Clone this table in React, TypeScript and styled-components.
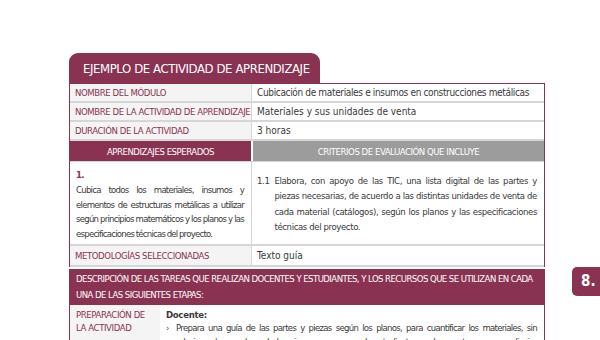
import styled, { createGlobalStyle } from "styled-components";

const maroon = "#8a3252";
const grey = "#9c9c9c";
const line = "#d6d6d6";
const labelBg = "#f5f4f4";
const text = "#3a3a3a";

const GlobalStyle = createGlobalStyle`
  html, body {
    margin: 0;
    padding: 0;
    background: #ffffff;
  }
  body {
    font-family: "DejaVu Sans Condensed", "DejaVu Sans", "Liberation Sans", sans-serif;
    font-stretch: condensed;
  }
`;

const Page = styled.div`
  width: 600px;
  height: 340px;
  overflow: hidden;
  display: flex;
  align-items: flex-start;
  gap: 27px;
  padding: 53px 0 0 69px;
  box-sizing: border-box;
`;

const Sheet = styled.div`
  width: 476px;
  flex-shrink: 0;
`;

const TitleTab = styled.div`
  width: 251px;
  height: 30px;
  box-sizing: border-box;
  background: ${maroon};
  border-radius: 9px 9px 0 0;
  color: #ffffff;
  font-size: 13px;
  letter-spacing: -0.4px;
  line-height: 32px;
  padding-left: 14px;
  white-space: nowrap;
`;

const Table = styled.div`
  border-left: 1px solid ${maroon};
  border-right: 1px solid ${maroon};
  border-top: 1px solid ${maroon};
`;

const Row = styled.div`
  display: grid;
  grid-template-columns: 182px 1fr;
  border-bottom: 2px solid ${line};
`;

const Label = styled.div<{ $h?: number }>`
  background: ${labelBg};
  color: ${maroon};
  font-size: 9.5px;
  letter-spacing: -0.4px;
  text-transform: uppercase;
  padding: 0 0 0 5px;
  min-height: ${(p) => p.$h ?? 17}px;
  display: flex;
  align-items: center;
  border-right: 1px solid ${line};
  white-space: nowrap;
`;

const Value = styled.div<{ $tight?: boolean }>`
  color: ${text};
  font-size: 10px;
  letter-spacing: ${(p) => (p.$tight ? "-0.35px" : "0")};
  padding: 0 5px;
  display: flex;
  align-items: center;
  white-space: nowrap;
`;

const HeadRow = styled.div`
  display: grid;
  grid-template-columns: 181px 1fr;
  gap: 2px;
  border-bottom: 1px solid ${line};
`;

const HeadCell = styled.div<{ $grey?: boolean }>`
  background: ${(p) => (p.$grey ? grey : maroon)};
  color: #ffffff;
  font-size: 9.5px;
  letter-spacing: -0.45px;
  height: 20px;
  display: flex;
  align-items: center;
  justify-content: center;
  text-transform: uppercase;
`;

const ContentRow = styled.div`
  display: grid;
  grid-template-columns: 182px 1fr;
  border-bottom: 2px solid ${line};
`;

const LearnCell = styled.div`
  padding: 6px 7px 2px 6px;
  border-right: 1px solid ${line};
  color: ${text};
  font-size: 9.5px;
  letter-spacing: -0.75px;
  word-spacing: -0.5px;
  line-height: 14.8px;
  text-align: justify;
`;

const Num = styled.div`
  color: ${maroon};
  font-weight: bold;
`;

const CritCell = styled.div`
  padding: 11px 7px 6px 5px;
  color: ${text};
  font-size: 9.5px;
  letter-spacing: -0.38px;
  line-height: 15.3px;
  display: flex;
  gap: 5px;
`;

const CritNum = styled.span`
  flex-shrink: 0;
`;

const CritText = styled.p`
  margin: 0;
  text-align: justify;
`;

const Spacer = styled.div`
  height: 2px;
`;

const Describe = styled.div`
  background: ${maroon};
  color: #ffffff;
  font-size: 9.5px;
  letter-spacing: -0.55px;
  line-height: 16px;
  padding: 2px 7px;
  text-transform: uppercase;
`;

const Stage = styled.div`
  display: grid;
  grid-template-columns: 90px 1fr;
  border-left: 1px solid ${maroon};
  border-right: 1px solid ${maroon};
  min-height: 50px;
`;

const StageLabel = styled.div`
  background: ${labelBg};
  color: ${maroon};
  font-size: 9.5px;
  letter-spacing: -0.4px;
  line-height: 13px;
  padding: 3px 3px 4px 6px;
  text-transform: uppercase;
`;

const StageBody = styled.div`
  padding: 3px 7px 0 6px;
  color: ${text};
  font-size: 9.5px;
  letter-spacing: -0.7px;
  line-height: 13.5px;
`;

const Who = styled.div`
  font-weight: bold;
  letter-spacing: -0.3px;
`;

const Bullet = styled.div`
  display: flex;
  gap: 4px;
  text-align: justify;
  &::before {
    content: "›";
    color: ${maroon};
    flex-shrink: 0;
    width: 6px;
  }
`;

const PageTab = styled.div`
  margin-top: 214px;
  flex-shrink: 0;
  width: 44px;
  height: 29px;
  box-sizing: border-box;
  background: ${maroon};
  border-radius: 5px 0 0 5px;
  color: #ffffff;
  font-weight: bold;
  font-size: 15px;
  line-height: 29px;
  padding-left: 9px;
`;

export default function App() {
  return (
    <>
      <GlobalStyle />
      <Page>
        <Sheet>
          <TitleTab>EJEMPLO DE ACTIVIDAD DE APRENDIZAJE</TitleTab>
          <Table>
            <Row>
              <Label>Nombre del módulo</Label>
              <Value $tight>Cubicación de materiales e insumos en construcciones metálicas</Value>
            </Row>
            <Row>
              <Label>Nombre de la actividad de aprendizaje</Label>
              <Value>Materiales y sus unidades de venta</Value>
            </Row>
            <Row>
              <Label>Duración de la actividad</Label>
              <Value>3 horas</Value>
            </Row>
            <HeadRow>
              <HeadCell>Aprendizajes esperados</HeadCell>
              <HeadCell $grey>Criterios de evaluación que incluye</HeadCell>
            </HeadRow>
            <ContentRow>
              <LearnCell>
                <Num>1.</Num>
                Cubica todos los materiales, insumos y elementos de estructuras
                metálicas a utilizar según principios matemáticos y los planos y
                las especificaciones técnicas del proyecto.
              </LearnCell>
              <CritCell>
                <CritNum>1.1</CritNum>
                <CritText>
                  Elabora, con apoyo de las TIC, una lista digital de las partes y
                  piezas necesarias, de acuerdo a las distintas unidades de venta de
                  cada material (catálogos), según los planos y las especificaciones
                  técnicas del proyecto.
                </CritText>
              </CritCell>
            </ContentRow>
            <Row>
              <Label $h={19}>Metodologías seleccionadas</Label>
              <Value>Texto guía</Value>
            </Row>
          </Table>
          <Spacer />
          <Describe>
            Descripción de las tareas que realizan docentes y estudiantes, y los
            recursos que se utilizan en cada una de las siguientes etapas:
          </Describe>
          <Stage>
            <StageLabel>Preparación de la actividad</StageLabel>
            <StageBody>
              <Who>Docente:</Who>
              <Bullet>
                Prepara una guía de las partes y piezas según los planos, para
                cuantificar los materiales, sin relacionar los nombres de las piezas
                para que cada estudiante pueda rescatar sus aprendizajes previos.
              </Bullet>
            </StageBody>
          </Stage>
        </Sheet>
        <PageTab>8.</PageTab>
      </Page>
    </>
  );
}
